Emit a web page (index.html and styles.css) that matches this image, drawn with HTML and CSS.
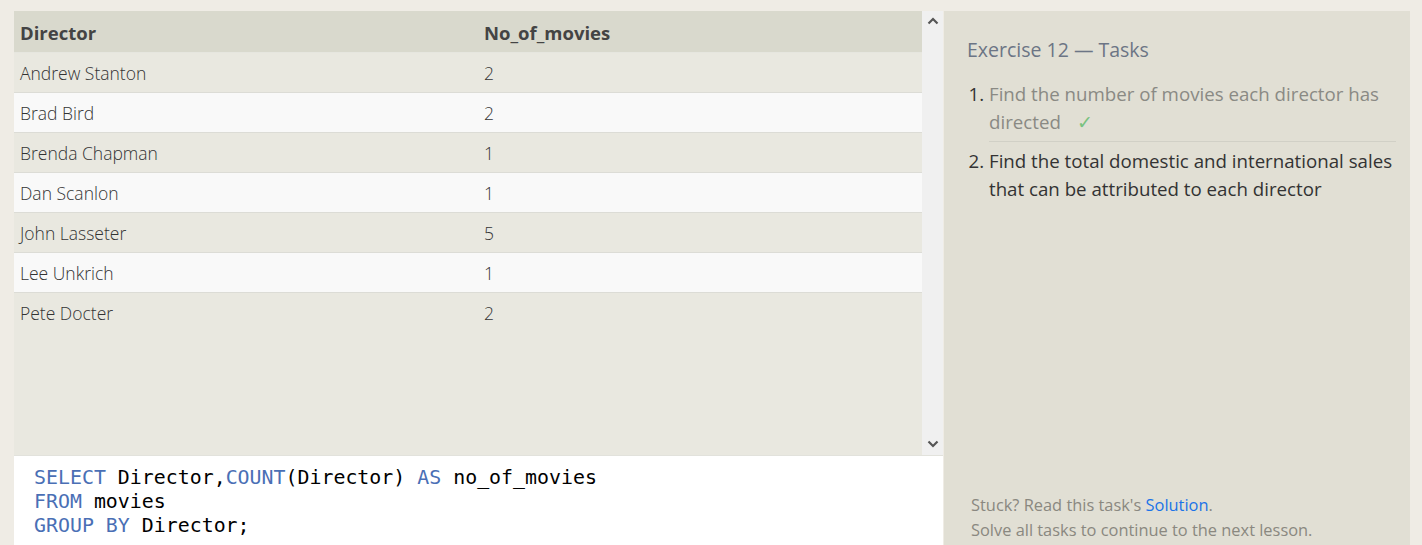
FILE: index.html
```html
<!DOCTYPE html>
<html>
<head>
<meta charset="utf-8">
<link rel="stylesheet" href="styles.css">
</head>
<body>
<div class="page">
  <div class="left">
    <div class="results">
      <div class="table-wrap">
        <table class="grid">
          <thead>
            <tr><th class="c1">Director</th><th>No_of_movies</th></tr>
          </thead>
          <tbody>
            <tr><td class="c1">Andrew Stanton</td><td>2</td></tr>
            <tr><td class="c1">Brad Bird</td><td>2</td></tr>
            <tr><td class="c1">Brenda Chapman</td><td>1</td></tr>
            <tr><td class="c1">Dan Scanlon</td><td>1</td></tr>
            <tr><td class="c1">John Lasseter</td><td>5</td></tr>
            <tr><td class="c1">Lee Unkrich</td><td>1</td></tr>
            <tr><td class="c1">Pete Docter</td><td>2</td></tr>
          </tbody>
        </table>
      </div>
      <div class="scrollbar">
        <svg class="arrow" width="12" height="8" viewBox="0 0 12 8"><path d="M1.5 6.5 L6 2 L10.5 6.5" fill="none" stroke="#555" stroke-width="2.2"/></svg>
        <svg class="arrow" width="12" height="8" viewBox="0 0 12 8"><path d="M1.5 1.5 L6 6 L10.5 1.5" fill="none" stroke="#555" stroke-width="2.2"/></svg>
      </div>
    </div>
    <pre class="editor"><span class="kw">SELECT</span> Director,<span class="kw">COUNT</span>(Director) <span class="kw">AS</span> no_of_movies
<span class="kw">FROM</span> movies
<span class="kw">GROUP BY</span> Director;</pre>
  </div>
  <div class="right">
    <h2 class="title">Exercise 12 — Tasks</h2>
    <ol class="tasks">
      <li class="done"><div class="txt">Find the number of movies each director has directed<span class="check">✓</span></div></li>
      <li><div class="txt">Find the total domestic and international sales that can be attributed to each director</div></li>
    </ol>
    <div class="spacer"></div>
    <div class="help">
      <p>Stuck? Read this task's <a href="#">Solution</a>.</p>
      <p>Solve all tasks to continue to the next lesson.</p>
    </div>
  </div>
</div>
</body>
</html>
```
FILE: styles.css
```css
html, body {
  margin: 0;
  padding: 0;
  height: 100%;
  overflow: hidden;
}
body {
  background: #efece5;
  font-family: "Open Sans", "Liberation Sans", sans-serif;
}
.page {
  display: flex;
  padding: 11px 0 0 14px;
  height: 534px;
  gap: 1px;
}
.left {
  width: 929px;
  display: flex;
  flex-direction: column;
  background: #fff;
}
.results {
  display: flex;
  height: 444px;
  border-bottom: 1px solid #e2e2dc;
}
.table-wrap {
  width: 908px;
  background: #e9e8e0;
}
.scrollbar {
  width: 21px;
  background: #f0f0f0;
  display: flex;
  flex-direction: column;
  justify-content: space-between;
  align-items: center;
  padding: 6px 0 7px;
  box-sizing: border-box;
}
.arrow { display: block; }
.grid {
  width: 100%;
  border-collapse: collapse;
  font-size: 17.5px;
  color: #333;
}
.grid th {
  background: #d9d9cd;
  font-weight: 700;
  text-align: left;
  height: 41px;
  padding: 2px 0 0 6px;
  box-sizing: border-box;
  border-bottom: 1px solid #e6e6df;
  color: #444;
  font-size: 18.5px;
}
.grid td {
  height: 40px;
  padding: 2px 0 0 6px;
  box-sizing: border-box;
  font-weight: 300;
  border-bottom: 1px solid #dcdcd6;
}
.grid .c1 { width: 464px; }
.grid tbody tr:nth-child(odd) td { background: #e9e8e0; }
.grid tbody tr:nth-child(even) td { background: #f9f9f9; }
.grid tbody tr:last-child td { border-bottom: none; }
.editor {
  margin: 0;
  padding: 10px 20px 0;
  font-family: "DejaVu Sans Mono", monospace;
  font-size: 19.9px;
  line-height: 24px;
  color: #000;
  background: #fff;
  flex: 1;
}
.kw { color: #4a6fb5; }
.right {
  width: 466px;
  background: #e1dfd4;
  display: flex;
  flex-direction: column;
  padding: 25px 14px 0 23px;
  box-sizing: border-box;
}
.title {
  margin: 0;
  font-weight: 400;
  font-size: 19.5px;
  color: #6c7585;
  line-height: 28px;
}
.tasks {
  margin: 16px 0 0;
  padding: 0 0 0 22px;
  font-size: 18.7px;
  line-height: 28px;
  color: #333;
}
.tasks li { padding-left: 0; }
.tasks li .txt { padding-bottom: 5px; }
.tasks li.done .txt {
  color: #8a8a84;
  border-bottom: 1px solid #d1d0c6;
  margin-bottom: 5px;
}
.check {
  display: inline-block;
  color: #79c27f;
  margin-left: 16px;
}
.spacer { flex: 1; }
.help {
  padding: 0 0 3px 4px;
  font-size: 16.4px;
  line-height: 25px;
  color: #8a8880;
}
.help p { margin: 0; }
.help a { color: #1a73e8; text-decoration: none; }
```
